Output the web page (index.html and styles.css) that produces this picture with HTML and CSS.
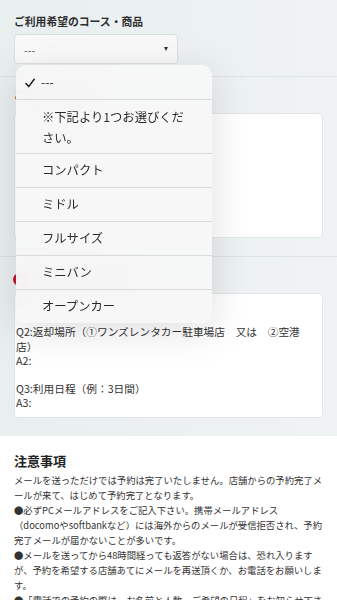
FILE: index.html
```html
<!DOCTYPE html>
<html lang="ja">
<head>
    <meta charset="UTF-8">
    <meta name="viewport" content="width=device-width, initial-scale=1.0">
    <title>ご予約フォーム</title>
    <link rel="stylesheet" href="styles.css">
</head>
<body>
    <form class="form">
        <div class="field">
            <p class="label">ご利用希望のコース・商品</p>
            <div class="select">
                <span>---</span>
                <span class="arrow"></span>
            </div>
        </div>

        <div class="field">
            <p class="label">ご質問・ご要望</p>
            <textarea class="text"></textarea>
        </div>

        <div class="field last">
            <p class="label"><span class="badge">必須</span>お問い合わせ内容</p>
            <textarea class="text">A1:

Q2:返却場所（①ワンズレンタカー駐車場店　又は　②空港店）
A2:

Q3:利用日程（例：3日間）
A3:</textarea>
        </div>

        <ul class="picker">
            <li class="selected">
                <svg class="check" width="10" height="10" viewBox="0 0 10 10"><path d="M1 5.6 L3.7 8.6 L9.2 1.2" fill="none" stroke="#1e1e1e" stroke-width="1.5" stroke-linecap="round" stroke-linejoin="round"/></svg>---
            </li>
            <li class="note">※下記より1つお選びください。</li>
            <li>コンパクト</li>
            <li>ミドル</li>
            <li>フルサイズ</li>
            <li>ミニバン</li>
            <li>オープンカー</li>
        </ul>
    </form>

    <div class="notes">
        <h2>注意事項</h2>
        <p>
            メールを送っただけでは予約は完了いたしません。店舗からの予約完了メールが来て、はじめて予約完了となります。<br>
            ●必ずPCメールアドレスをご記入下さい。携帯メールアドレス（docomoやsoftbankなど）には海外からのメールが受信拒否され、予約完了メールが届かないことが多いです。<br>
            ●メールを送ってから48時間経っても返答がない場合は、恐れ入りますが、予約を希望する店舗あてにメールを再送頂くか、お電話をお願いします。<br>
            ●「電話での予約の際は、お名前と人数、ご希望の日程」をお知らせ下さい。
        </p>
    </div>
</body>
</html>
```

FILE: styles.css
```css
* {
    margin: 0;
    padding: 0;
    box-sizing: border-box;
}
body {
    font-family: "Noto Sans CJK JP", "Noto Sans", sans-serif;
    color: #333;
    background-color: #ffffff;
}
.form {
    position: relative;
    background: linear-gradient(90deg, #e9eeef, #eff3f3);
}
.field {
    padding: 14px 14px 12px;
    border-bottom: 1px solid #dde2e3;
}
.field:nth-child(2) {
    padding-top: 11px;
    padding-bottom: 18px;
}
.field.last {
    padding-top: 15px;
    padding-bottom: 18px;
    border-bottom: none;
}
.label {
    font-size: 10.8px;
    font-weight: bold;
    line-height: 14px;
    color: #2e2e2e;
    display: flex;
    align-items: center;
}
.badge {
    display: inline-block;
    background-color: #c3132f;
    color: #ffffff;
    font-size: 8px;
    line-height: 13px;
    padding: 0 4px;
    border-radius: 7px;
    margin-left: -1px;
    margin-right: 5px;
}
.select {
    margin-top: 6px;
    width: 164px;
    height: 30px;
    background-color: #f9f9f9;
    border: 1px solid #dcdfe0;
    border-radius: 4px;
    display: flex;
    align-items: center;
    justify-content: space-between;
    padding: 0 9px 0 9px;
    font-size: 10.7px;
    color: #555;
}
.arrow {
    width: 0;
    height: 0;
    border-left: 2.5px solid transparent;
    border-right: 2.5px solid transparent;
    border-top: 4px solid #333;
}
.text {
    display: block;
    width: 100%;
    height: 125px;
    margin-top: 11px;
    background-color: #ffffff;
    border: 1px solid #e3e6e7;
    border-radius: 4px;
    padding: 3px 8px 2px 1px;
    font-family: "Noto Sans CJK JP", "Noto Sans", sans-serif;
    font-size: 10.7px;
    line-height: 14.2px;
    color: #333;
    resize: none;
    outline: none;
}
.field.last .text {
    margin-top: 7px;
}
.picker {
    position: absolute;
    left: 16px;
    top: 65px;
    width: 196px;
    list-style: none;
    background-color: rgba(246, 246, 246, 0.94);
    backdrop-filter: blur(12px);
    border-radius: 10px;
    box-shadow: 0 8px 40px rgba(0, 0, 0, 0.13);
    overflow: hidden;
}
.picker li {
    font-size: 12.3px;
    line-height: 21px;
    padding: 6px 22px 6px 26px;
    border-top: 1px solid #dadada;
    color: #2b2b2b;
}
.picker li.selected {
    border-top: none;
    padding-top: 6.5px;
    padding-bottom: 6.5px;
}
.picker li.note {
    padding-top: 6.5px;
    padding-bottom: 4.5px;
}
.check {
    margin-left: -17px;
    margin-right: 6px;
    vertical-align: -1px;
}
.notes {
    padding: 16px 14px 20px;
}
.notes h2 {
    font-size: 13px;
    font-weight: bold;
    line-height: 18px;
    color: #222;
}
.notes p {
    margin-top: 3px;
    font-size: 9.35px;
    line-height: 15px;
    color: #333;
}
```
